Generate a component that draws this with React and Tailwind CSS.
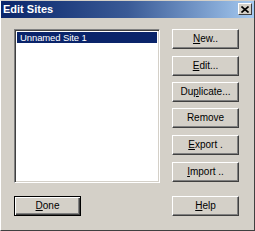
import React from "react";

const btn =
  "h-[20px] w-[67px] flex items-center justify-center bg-[#d4d0c8] text-black text-[10px] border border-t-white border-l-white border-r-[#404040] border-b-[#404040] shadow-[inset_-1px_-1px_0_#808080] leading-none";

function U({ children }) {
  return <span className="underline underline-offset-[1px]">{children}</span>;
}

export default function App() {
  return (
    <div className="w-[255px] h-[231px] bg-[#d4d0c8] flex flex-col border-l border-t border-r border-b border-l-white border-t-[#d4d0c8] border-r-[#404040] border-b-[#404040] font-['Liberation_Sans',Arial,sans-serif] overflow-hidden">
      <div className="h-[18px] mt-[-1px] mx-[0px] flex items-center bg-gradient-to-r from-[#0a246a] via-[#3a5a96] to-[#a6caf0]">
        <span className="text-white font-bold text-[11px] pl-[2px] leading-none">Edit Sites</span>
        <div className="ml-auto mr-[2px] w-[14px] h-[12px] bg-[#d4d0c8] border border-t-white border-l-white border-r-[#404040] border-b-[#404040] flex items-center justify-center">
          <svg width="8" height="7" viewBox="0 0 8 7">
            <path d="M0.5 0.5 L7.5 6.5 M7.5 0.5 L0.5 6.5" stroke="black" strokeWidth="1.6" />
          </svg>
        </div>
      </div>
      <div className="flex pl-[13px] pt-[11px]">
        <div className="flex flex-col w-[146px]">
          <div className="h-[154px] bg-white border border-t-[#808080] border-l-[#808080] border-r-white border-b-white shadow-[inset_1px_1px_0_#404040,inset_-1px_-1px_0_#d4d0c8] p-[2px]">
            <div className="h-[11px] bg-[#0a246a] text-white text-[9.5px] leading-[11px] pl-[3px] tracking-[-0.1px]">
              Unnamed Site 1
            </div>
          </div>
          <div className="mt-[13px] h-[20px] w-[67px] flex items-center justify-center bg-[#d4d0c8] text-black text-[10px] leading-none border border-black shadow-[inset_1px_1px_0_#fff,inset_-1px_-1px_0_#404040,inset_-2px_-2px_0_#808080]">
            <U>D</U>one
          </div>
        </div>
        <div className="flex flex-col ml-[12px]">
          <div className={btn}>
            <U>N</U>ew..
          </div>
          <div className={btn + " mt-[7px]"}>
            <U>E</U>dit...
          </div>
          <div className={btn + " mt-[6px]"}>
            Du<U>p</U>licate...
          </div>
          <div className={btn + " mt-[6px]"}>Remove</div>
          <div className={btn + " mt-[7px]"}>
            <U>E</U>xport .
          </div>
          <div className={btn + " mt-[7px]"}>
            <U>I</U>mport ..
          </div>
          <div className={btn + " mt-[14px]"}>
            <U>H</U>elp
          </div>
        </div>
      </div>
    </div>
  );
}
